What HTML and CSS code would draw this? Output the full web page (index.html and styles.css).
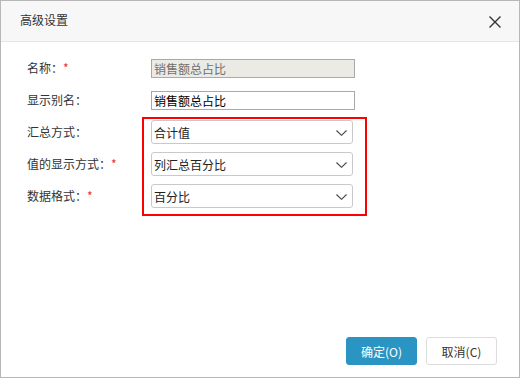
FILE: index.html
```html
<!DOCTYPE html>
<html>
<head>
<meta charset="utf-8">
<link rel="stylesheet" href="styles.css">
</head>
<body>
<div class="dialog">
  <div class="header">
    <span class="title">高级设置</span>
    <svg class="close" width="12" height="12" viewBox="0 0 12 12"><path d="M0.5 0.5 L11.5 11.5 M11.5 0.5 L0.5 11.5" stroke="#333" stroke-width="1.4" fill="none"/></svg>
  </div>
  <div class="form">
    <div class="row"><label class="lbl">名称：<span class="req">*</span></label><div class="input disabled">销售额总占比</div></div>
    <div class="row"><label class="lbl">显示别名：</label><div class="input">销售额总占比</div></div>
    <div class="row"><label class="lbl">汇总方式：</label><div class="select"><span>合计值</span><svg width="11" height="6" viewBox="0 0 11 6"><path d="M0.5 0.5 L5.5 5.3 L10.5 0.5" stroke="#444" stroke-width="1.1" fill="none"/></svg></div></div>
    <div class="row"><label class="lbl">值的显示方式：<span class="req">*</span></label><div class="select"><span>列汇总百分比</span><svg width="11" height="6" viewBox="0 0 11 6"><path d="M0.5 0.5 L5.5 5.3 L10.5 0.5" stroke="#444" stroke-width="1.1" fill="none"/></svg></div></div>
    <div class="row"><label class="lbl">数据格式：<span class="req">*</span></label><div class="select"><span>百分比</span><svg width="11" height="6" viewBox="0 0 11 6"><path d="M0.5 0.5 L5.5 5.3 L10.5 0.5" stroke="#444" stroke-width="1.1" fill="none"/></svg></div></div>
    <div class="highlight"></div>
  </div>
  <div class="footer">
    <button class="btn primary">确定(O)</button>
    <button class="btn">取消(C)</button>
  </div>
</div>
</body>
</html>
```
FILE: styles.css
```css
* { box-sizing: border-box; }
html, body { margin: 0; padding: 0; background: #fff; }
body { font-family: "Noto Sans CJK SC", "Noto Sans", sans-serif; font-size: 12px; color: #333; }
.dialog {
  width: 520px; height: 378px;
  border: 1px solid #b7b7b7;
  display: flex; flex-direction: column;
  background: #fff;
}
.header {
  height: 41px;
  background: #f7f7f7;
  border-bottom: 1px solid #e5e5e5;
  display: flex; align-items: center; justify-content: space-between;
  padding: 0 18px 0 19px;
}
.title { font-size: 12px; color: #333; line-height: 1; margin-top: -2px; }
.close { margin-top: 1px; }
.form {
  position: relative;
  padding: 10px 0 0 26px;
  display: flex; flex-direction: column;
}
.row { height: 32px; display: flex; align-items: center; }
.lbl { width: 124px; color: #333; line-height: 1; }
.req { color: #e53333; }
.input {
  width: 204px; height: 19px;
  border: 1px solid #a9a9a9;
  padding: 0 2px;
  line-height: 17px;
  color: #000;
  background: #fff;
}
.input.disabled { background: #ebeae4; color: #707070; }
.select {
  width: 202px; height: 24px;
  border: 1px solid #c9c9c9;
  border-radius: 3px;
  display: flex; align-items: center; justify-content: space-between;
  padding: 0 5px 0 2px;
  color: #222;
}
.select svg { margin-right: 0px; margin-top: 1px; }
.highlight {
  position: absolute;
  left: 141px; top: 75px;
  width: 225px; height: 99px;
  border: 2px solid #f00;
  pointer-events: none;
}
.footer {
  margin-top: auto;
  display: flex; justify-content: flex-end; gap: 9px;
  padding: 0 22px 12px 0;
}
.btn {
  width: 71px; height: 28px;
  border: 1px solid #dcdcdc;
  border-radius: 3px;
  background: #fff;
  font-family: inherit; font-size: 12px; color: #333;
  padding: 0;
}
.btn.primary { background: #2a95c3; border-color: #2a95c3; color: #fff; }
```
